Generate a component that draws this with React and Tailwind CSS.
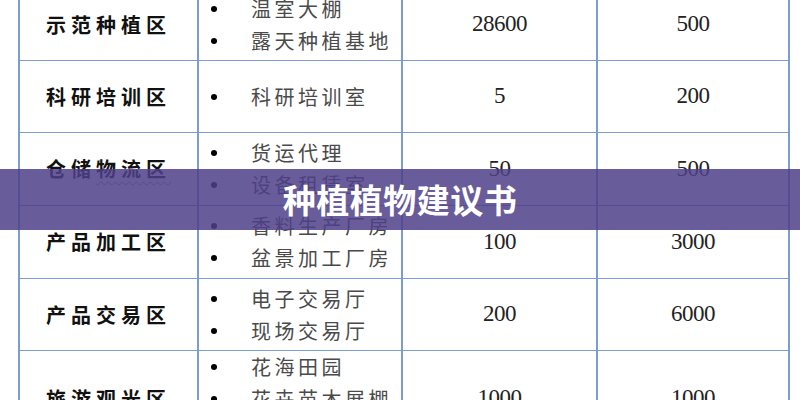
import React from "react";

const rows = [
  { name: "示范种植区", items: ["温室大棚", "露天种植基地"], area: "28600", cost: "500", h: "h-[72px]" },
  { name: "科研培训区", items: ["科研培训室"], area: "5", cost: "200", h: "h-[72px]" },
  { name: "仓储物流区", items: ["货运代理", "设备租赁室"], area: "50", cost: "500", h: "h-[73px]", wavy: true },
  { name: "产品加工区", items: ["香料生产厂房", "盆景加工厂房"], area: "100", cost: "3000", h: "h-[73px]" },
  { name: "产品交易区", items: ["电子交易厅", "现场交易厅"], area: "200", cost: "6000", h: "h-[72px]" },
  { name: "旅游观光区", items: ["花海田园", "花卉苗木展棚", "生态餐厅"], area: "1000", cost: "1000", h: "h-[96px]" }
];

const cjk = { fontFamily: '"Noto Sans CJK SC", "Noto Sans", sans-serif' };
const serif = { fontFamily: '"Liberation Serif", "DejaVu Serif", serif' };

const Label = ({ row }) => {
  if (!row.wavy) return <span>{row.name}</span>;
  return (
    <span>
      仓储
      <span className="underline decoration-wavy decoration-[#8a93c8] decoration-1 underline-offset-4">物流区</span>
    </span>
  );
};

const App = () => {
  return (
    <div className="relative h-[400px] w-[800px] overflow-hidden bg-white">
      <div className="-mt-[11px] ml-[18px] w-[772px] border-x-2 border-[#7c9dd2]">
        {rows.map((row) => (
          <div key={row.name} className={`flex ${row.h} border-b border-[#7c9dd2]`}>
            <div
              className="flex w-[179px] items-center justify-center border-r-2 border-[#7c9dd2] text-[20px] font-bold tracking-[5px] text-[#111]"
              style={cjk}
            >
              <Label row={row} />
            </div>
            <div className="flex w-[204px] flex-col justify-center border-r-2 border-[#7c9dd2] pl-[12px]" style={cjk}>
              {row.items.map((item) => (
                <div key={item} className="flex h-[32px] items-center text-[20px] tracking-[3.5px] text-[#4a4a4a]">
                  <span className="mr-[34px] h-[6px] w-[6px] rounded-full bg-black" />
                  {item}
                </div>
              ))}
            </div>
            <div
              className="flex w-[195px] items-center justify-center border-r-2 border-[#7c9dd2] text-[23px] tracking-[-0.5px] text-[#222]"
              style={serif}
            >
              {row.area}
            </div>
            <div className="flex flex-1 items-center justify-center text-[23px] tracking-[-0.5px] text-[#222]" style={serif}>
              {row.cost}
            </div>
          </div>
        ))}
      </div>

      {/* title banner over the table */}
      <div className="absolute left-0 right-0 top-[169px] flex h-[61px] items-center justify-center bg-[#4f3f88]/85">
        <span className="text-[33px] font-bold tracking-[0.5px] text-white" style={cjk}>
          种植植物建议书
        </span>
      </div>
    </div>
  );
};

export default App;
